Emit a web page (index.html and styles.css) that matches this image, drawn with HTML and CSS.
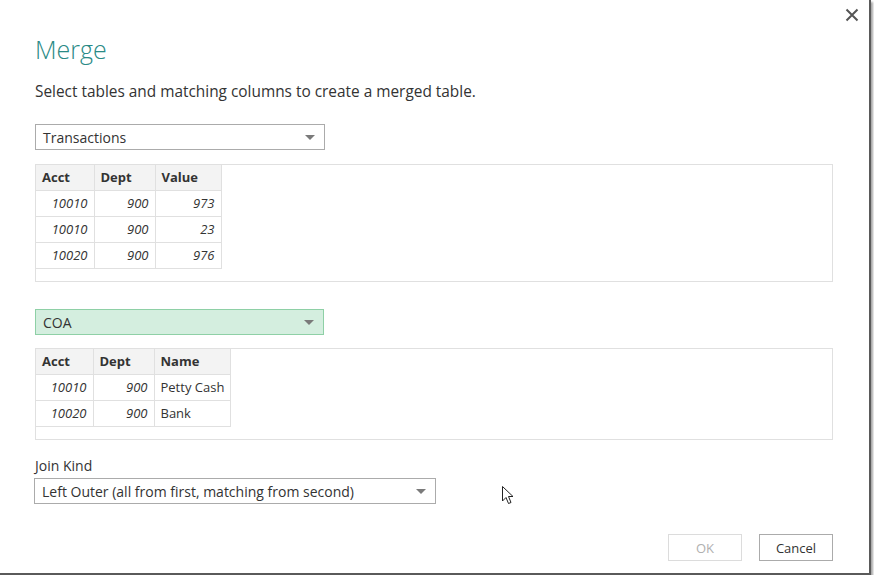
FILE: index.html
```html
<!DOCTYPE html>
<html>
<head>
<meta charset="utf-8">
<link rel="stylesheet" href="styles.css">
</head>
<body>
<div class="frame">
  <div class="close" aria-label="Close">
    <svg width="14" height="14" viewBox="0 0 14 14"><path d="M1.5 1.5 L12.5 12.5 M12.5 1.5 L1.5 12.5" stroke="#555" stroke-width="2" fill="none"/></svg>
  </div>
  <div class="content">
    <h1 class="title">Merge</h1>
    <p class="subtitle">Select tables and matching columns to create a merged table.</p>

    <div class="select sel-1"><span>Transactions</span><i class="arrow"></i></div>
    <div class="panel panel-1">
      <table class="grid">
        <colgroup><col style="width:58px"><col style="width:61px"><col style="width:66px"></colgroup>
        <thead><tr><th>Acct</th><th>Dept</th><th>Value</th></tr></thead>
        <tbody>
          <tr><td class="num">10010</td><td class="num">900</td><td class="num">973</td></tr>
          <tr><td class="num">10010</td><td class="num">900</td><td class="num">23</td></tr>
          <tr><td class="num">10020</td><td class="num">900</td><td class="num">976</td></tr>
        </tbody>
      </table>
    </div>

    <div class="select sel-2 selected"><span>COA</span><i class="arrow"></i></div>
    <div class="panel panel-2">
      <table class="grid">
        <colgroup><col style="width:57px"><col style="width:61px"><col style="width:76px"></colgroup>
        <thead><tr><th>Acct</th><th>Dept</th><th>Name</th></tr></thead>
        <tbody>
          <tr><td class="num">10010</td><td class="num">900</td><td>Petty Cash</td></tr>
          <tr><td class="num">10020</td><td class="num">900</td><td>Bank</td></tr>
        </tbody>
      </table>
    </div>

    <div class="join-label">Join Kind</div>
    <div class="join-row">
      <div class="select sel-3"><span>Left Outer (all from first, matching from second)</span><i class="arrow"></i></div>
      <svg class="cursor" width="14" height="20" viewBox="0 0 14 20"><path d="M1.5 1.5 L1.5 16 L5 12.5 L7.5 18.5 L10 17.5 L7.5 11.5 L12 11.5 Z" fill="#fff" stroke="#222" stroke-width="1" stroke-linejoin="miter"/></svg>
    </div>

    <div class="buttons">
      <button class="btn disabled">OK</button>
      <button class="btn">Cancel</button>
    </div>
  </div>
</div>
</body>
</html>
```
FILE: styles.css
```css
html, body {
  margin: 0;
  padding: 0;
  background: #ffffff;
}
body {
  font-family: "Open Sans", "Noto Sans", "Liberation Sans", sans-serif;
  color: #333;
}
.frame {
  position: relative;
  width: 869px;
  height: 573px;
  background: #fff;
  border-right: 2px solid #5a5a5a;
  border-bottom: 2px solid #5a5a5a;
  box-shadow: 2px 2px 2px rgba(0,0,0,0.35);
}
.close {
  position: absolute;
  top: 8px;
  left: 845px;
  width: 14px;
  height: 14px;
}
.close svg { display: block; }
.content {
  padding: 30px 36px 0 35px;
  display: flex;
  flex-direction: column;
}
.title {
  margin: 0;
  font-weight: 300;
  font-size: 25px;
  line-height: 38px;
  color: #2a8a86;
  height: 38px;
}
.subtitle {
  margin: 13px 0 0 0;
  font-size: 15.4px;
  line-height: 22px;
  color: #333;
}
.select {
  box-sizing: border-box;
  height: 26px;
  border: 1px solid #ababab;
  background: #fff;
  display: flex;
  align-items: center;
  justify-content: space-between;
  padding: 0 9px 0 7px;
  font-size: 14px;
  color: #333;
}
.arrow {
  width: 0;
  height: 0;
  border-left: 5px solid transparent;
  border-right: 5px solid transparent;
  border-top: 5px solid #7a7a7a;
}
.sel-1 { width: 290px; margin-top: 21px; }
.sel-2 {
  width: 289px;
  margin-top: 27px;
  background: #d4eedf;
  border-color: #8ed0a6;
}
.sel-3 { width: 402px; margin-left: -1px; }
.panel {
  box-sizing: border-box;
  border: 1px solid #e0e0e0;
  background: #fff;
}
.panel-1 { height: 118px; margin-top: 14px; }
.panel-2 { height: 92px; margin-top: 13px; }
.grid {
  border-collapse: collapse;
  table-layout: fixed;
  font-size: 13px;
  margin: -1px 0 0 0;
}
.grid th, .grid td {
  border: 1px solid #e0e0e0;
  height: 25px;
  padding: 0 6px;
  line-height: 25px;
  white-space: nowrap;
}
.grid th {
  text-align: left;
  font-weight: 700;
  background: #f3f3f3;
  color: #333;
}
.grid td { color: #333; }
.grid td.num {
  font-style: italic;
  text-align: right;
}
.grid tr > :first-child { border-left: none; }
.join-label {
  margin-top: 16px;
  font-size: 14px;
  line-height: 20px;
  color: #333;
}
.join-row {
  margin-top: 2px;
  display: flex;
  align-items: flex-start;
}
.cursor {
  margin-left: 65px;
  margin-top: 7px;
}
.buttons {
  margin-top: 29px;
  display: flex;
  justify-content: flex-end;
  gap: 17px;
}
.btn {
  box-sizing: border-box;
  width: 74px;
  height: 27px;
  border: 1px solid #ababab;
  background: #fff;
  font-family: inherit;
  font-size: 13px;
  color: #333;
  padding: 0;
}
.btn.disabled {
  color: #b0b0b0;
  border-color: #dcdcdc;
}
```
